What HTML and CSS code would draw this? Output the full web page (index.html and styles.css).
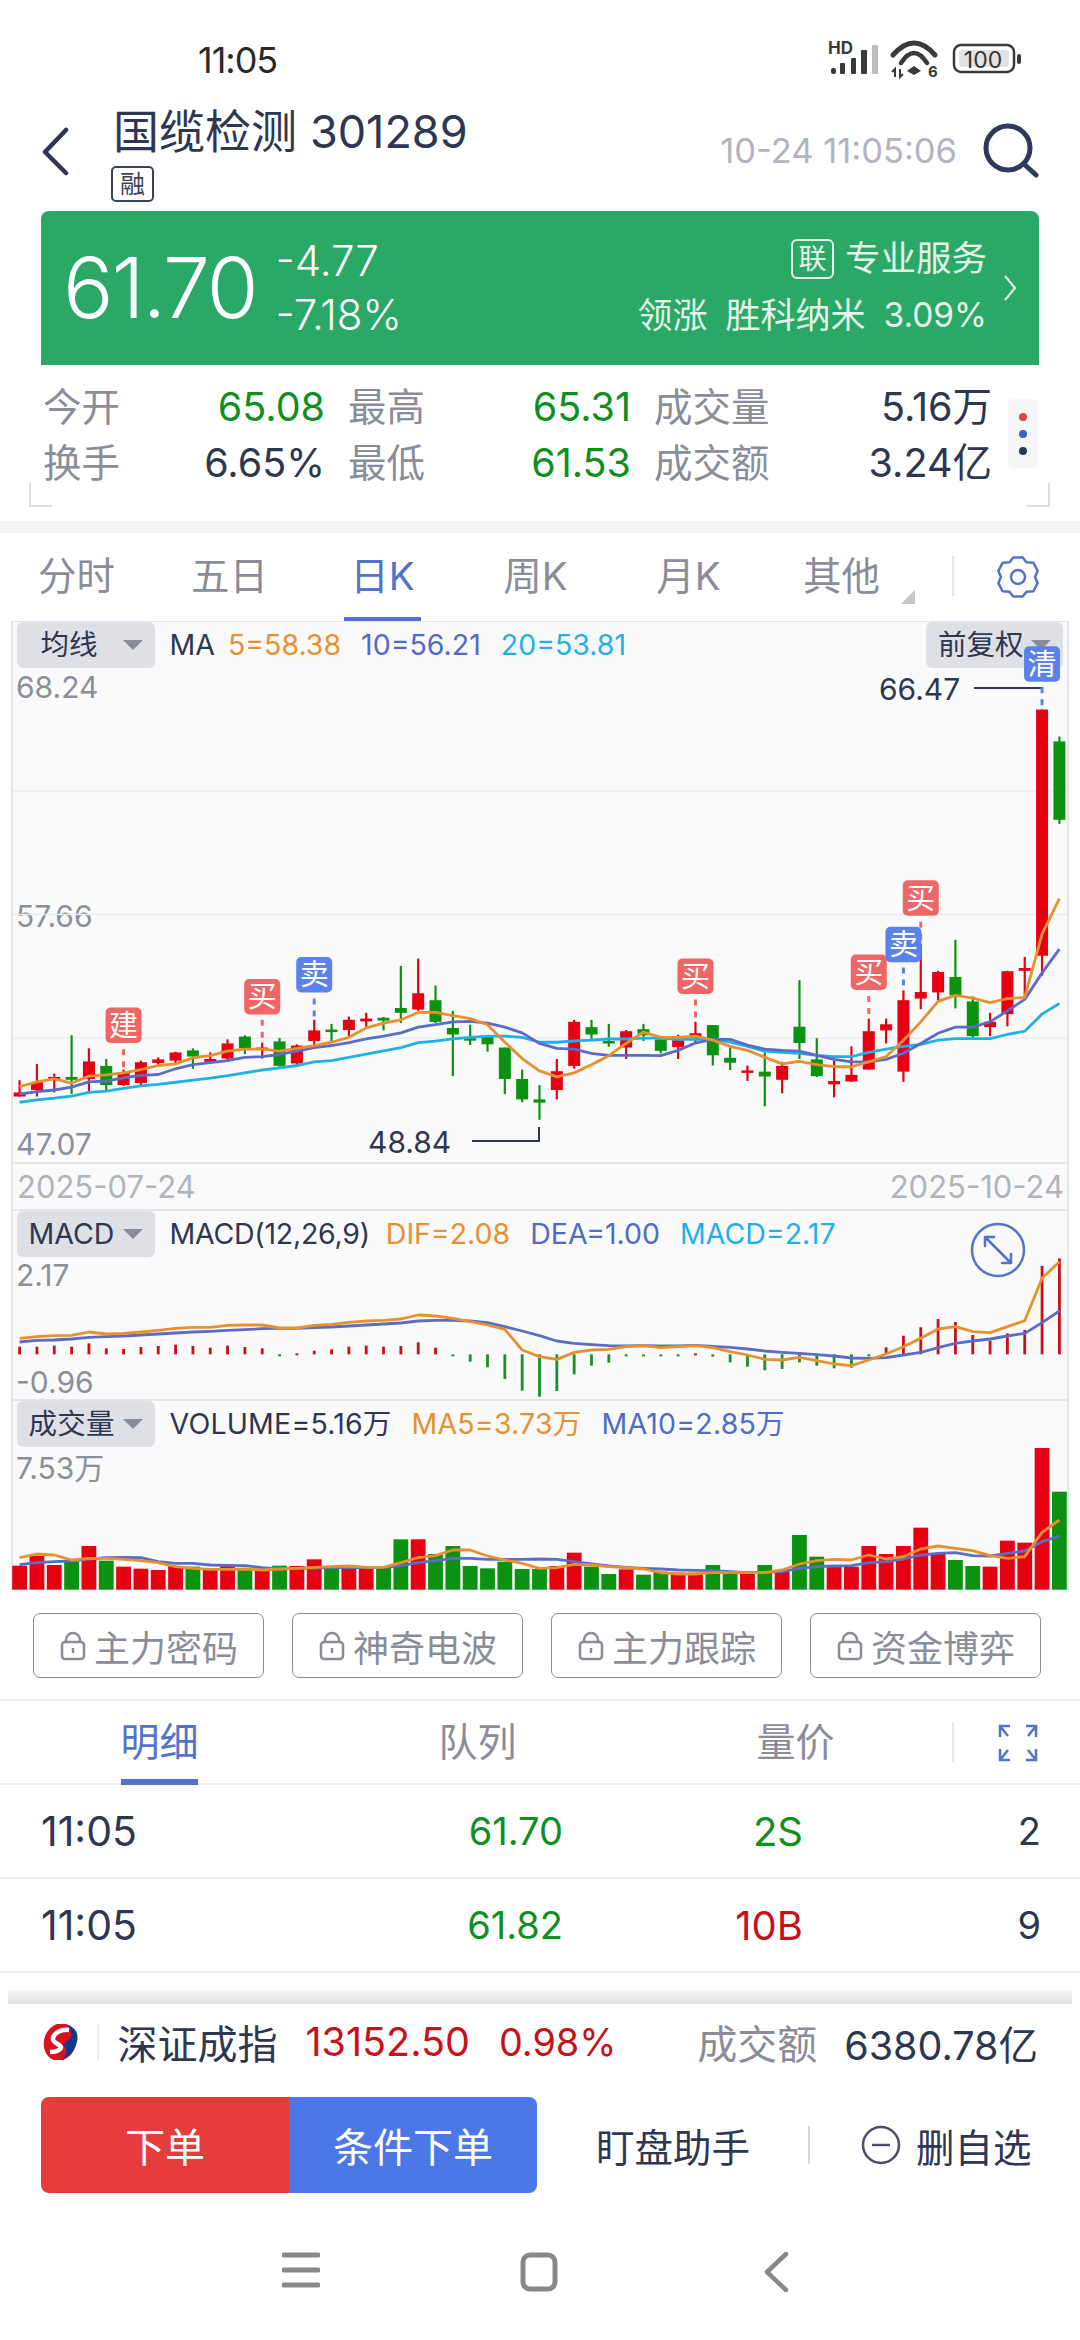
FILE: index.html
```html
<!DOCTYPE html>
<html lang="zh-CN">
<head>
<meta charset="utf-8">
<title>国缆检测 301289</title>
<link rel="stylesheet" href="styles.css">
</head>
<body>
<div class="page">
  <div class="status">
    <span class="clock">11:05</span>
    <svg class="status-icons" width="198" height="40" viewBox="826 40 198 40">
      <text x="828" y="54" class="s-hd">HD</text>
      <rect x="831" y="68" width="5" height="6" rx="2" fill="#3a3a3a"/>
      <rect x="840" y="63" width="5" height="11" rx="1" fill="#3a3a3a"/>
      <rect x="851" y="58" width="5" height="16" rx="1" fill="#3a3a3a"/>
      <rect x="861" y="50" width="6" height="24" rx="1" fill="#3a3a3a"/>
      <rect x="872" y="45" width="6" height="29" rx="1" fill="#bdbdbd"/>
      <path d="M893 55Q914 31 935 55" fill="none" stroke="#3a3a3a" stroke-width="5" stroke-linecap="round"/>
      <path d="M901 63Q914 43 927 63" fill="none" stroke="#3a3a3a" stroke-width="4.5" stroke-linecap="round"/>
      <path d="M907 71L914 66L921 71L914 75Z" fill="#3a3a3a"/>
      <path d="M895 77V69L892 72M900 69V77L903 74" fill="none" stroke="#3a3a3a" stroke-width="2"/>
      <text x="928" y="77" class="s-six">6</text>
      <rect x="954" y="45" width="60" height="27" rx="7" fill="none" stroke="#3a3a3a" stroke-width="2.5"/>
      <rect x="959" y="50" width="50" height="17" rx="3" fill="#e2e2e2"/>
      <text x="983" y="68" class="s-batt">100</text>
      <rect x="1017" y="54" width="4" height="10" rx="2" fill="#3a3a3a"/>
    </svg>
  </div>

  <header class="head">
    <svg class="back" width="28" height="49" viewBox="0 0 28 49"><path d="M25 3L4 25L25 46" fill="none" stroke="#2e3650" stroke-width="4.5" stroke-linecap="round" stroke-linejoin="round"/></svg>
    <div class="name-block">
      <div class="name">国缆检测 <span class="code">301289</span></div>
      <span class="rong">融</span>
    </div>
    <span class="stamp">10-24 11:05:06</span>
    <svg class="search" width="56" height="55" viewBox="0 0 56 55"><circle cx="25" cy="25" r="22" fill="none" stroke="#2e3a58" stroke-width="5"/><path d="M41 41L53 52" stroke="#2e3a58" stroke-width="5" stroke-linecap="round"/></svg>
  </header>

  <section class="quote">
    <div class="price">61.70</div>
    <div class="change"><div>-4.77</div><div>-7.18%</div></div>
    <div class="svc">
      <div class="svc-top"><span class="lian">联</span><span>专业服务</span></div>
      <div class="svc-sub"><span>领涨</span><span>胜科纳米</span><span class="svc-pct">3.09%</span></div>
    </div>
    <svg class="q-arrow" width="14" height="26" viewBox="0 0 14 26"><path d="M2 1L12 13L2 25" fill="none" stroke="#e4f4ea" stroke-width="2"/></svg>
  </section>

  <section class="stats">
    <div class="stat-grid">
      <span class="lab">今开</span><span class="val down">65.08</span>
      <span class="lab">最高</span><span class="val down">65.31</span>
      <span class="lab">成交量</span><span class="val">5.16万</span>
      <span class="lab">换手</span><span class="val">6.65%</span>
      <span class="lab">最低</span><span class="val down">61.53</span>
      <span class="lab">成交额</span><span class="val">3.24亿</span>
    </div>
    <div class="dots"><i class="dot d-red"></i><i class="dot d-blue"></i><i class="dot d-dark"></i></div>
    <i class="bracket b-left"></i><i class="bracket b-right"></i>
  </section>
  <div class="band"></div>

  <nav class="ktabs">
    <div class="ktab"><span>分时</span></div>
    <div class="ktab"><span>五日</span></div>
    <div class="ktab on"><span>日K</span></div>
    <div class="ktab"><span>周K</span></div>
    <div class="ktab"><span>月K</span></div>
    <div class="ktab more"><span>其他</span></div>
    <i class="tab-sep"></i>
    <svg class="gear" width="44" height="44" viewBox="0 0 44 44"><polygon points="17.3,2.5 26.7,2.5 30.5,7.3 37.4,7.7 41.6,15.9 39,22 41.6,28.1 37.4,36.3 30.5,36.7 26.7,41.5 17.3,41.5 13.5,36.7 6.6,36.3 2.4,28.1 5,22 2.4,15.9 6.6,7.7 13.5,7.3" fill="none" stroke="#5272cc" stroke-width="2.5" stroke-linejoin="round"/><circle cx="22" cy="22" r="7" fill="none" stroke="#5272cc" stroke-width="2.5"/></svg>
  </nav>

  <section class="chart">
    <div class="pane p-price">
      <div class="legend">
        <div class="pill"><span class="pill-t">均线</span><i class="caret"></i></div>
        <span class="tight">MA</span>
        <span class="c-or">5=58.38</span><span class="c-bl">10=56.21</span><span class="c-cy">20=53.81</span>
        <div class="pill pill-r"><span>前复权</span><i class="caret"></i></div>
      </div>
      <span class="axis a1">68.24</span>
      <span class="axis a2">57.66</span>
      <span class="axis a3">47.07</span>
      <span class="note n-low">48.84</span>
      <span class="note n-high">66.47</span>
      <svg id="price" class="plot" viewBox="13 621 1054 541"></svg>
    </div>
    <div class="dates"><span>2025-07-24</span><span>2025-10-24</span></div>
    <div class="pane p-macd">
      <div class="legend">
        <div class="pill"><span>MACD</span><i class="caret"></i></div>
        <span class="leg-fn">MACD(12,26,9)</span>
        <span class="c-or">DIF=2.08</span><span class="c-bl">DEA=1.00</span><span class="c-cy">MACD=2.17</span>
      </div>
      <span class="axis a4">2.17</span>
      <span class="axis a5">-0.96</span>
      <svg id="macd" class="plot" viewBox="13 1209 1054 190"></svg>
      <svg class="swap" width="56" height="56" viewBox="0 0 56 56"><circle cx="28" cy="28" r="26" fill="none" stroke="#5272cc" stroke-width="2.5"/><path d="M15 15L41 41M15 24V15H24M41 32V41H32" fill="none" stroke="#5272cc" stroke-width="2.5" stroke-linecap="round" stroke-linejoin="round"/></svg>
    </div>
    <div class="pane p-vol">
      <div class="legend leg-vol">
        <div class="pill"><span>成交量</span><i class="caret"></i></div>
        <span>VOLUME=5.16万</span>
        <span class="c-or">MA5=3.73万</span><span class="c-bl">MA10=2.85万</span>
      </div>
      <span class="axis a6">7.53万</span>
      <svg id="vol" class="plot" viewBox="13 1399 1054 191"></svg>
    </div>
  </section>

  <section class="locks">
    <div class="lock"><svg class="lk" width="26" height="30" viewBox="0 0 26 30"><path d="M6 11V9a7 7 0 0 1 14 0v2" fill="none" stroke="#8a8d98" stroke-width="2.5"/><rect x="2" y="11" width="22" height="17" rx="3" fill="none" stroke="#8a8d98" stroke-width="2.5"/><path d="M13 17v5" stroke="#8a8d98" stroke-width="2.5"/></svg><span>主力密码</span></div>
    <div class="lock"><svg class="lk" width="26" height="30" viewBox="0 0 26 30"><path d="M6 11V9a7 7 0 0 1 14 0v2" fill="none" stroke="#8a8d98" stroke-width="2.5"/><rect x="2" y="11" width="22" height="17" rx="3" fill="none" stroke="#8a8d98" stroke-width="2.5"/><path d="M13 17v5" stroke="#8a8d98" stroke-width="2.5"/></svg><span>神奇电波</span></div>
    <div class="lock"><svg class="lk" width="26" height="30" viewBox="0 0 26 30"><path d="M6 11V9a7 7 0 0 1 14 0v2" fill="none" stroke="#8a8d98" stroke-width="2.5"/><rect x="2" y="11" width="22" height="17" rx="3" fill="none" stroke="#8a8d98" stroke-width="2.5"/><path d="M13 17v5" stroke="#8a8d98" stroke-width="2.5"/></svg><span>主力跟踪</span></div>
    <div class="lock"><svg class="lk" width="26" height="30" viewBox="0 0 26 30"><path d="M6 11V9a7 7 0 0 1 14 0v2" fill="none" stroke="#8a8d98" stroke-width="2.5"/><rect x="2" y="11" width="22" height="17" rx="3" fill="none" stroke="#8a8d98" stroke-width="2.5"/><path d="M13 17v5" stroke="#8a8d98" stroke-width="2.5"/></svg><span>资金博弈</span></div>
  </section>

  <nav class="dtabs">
    <div class="dtab on"><span>明细</span></div>
    <div class="dtab"><span>队列</span></div>
    <div class="dtab"><span>量价</span></div>
    <i class="tab-sep sep2"></i>
    <svg class="full" width="40" height="38" viewBox="0 0 40 38"><path d="M2 13V2H12M2 2L10 12M38 13V2H28M38 2L30 12M2 25V36H12M2 36L10 26M38 25V36H28M38 36L30 26" fill="none" stroke="#5272cc" stroke-width="2.5"/></svg>
  </nav>

  <div class="row"><span class="r-time">11:05</span><span class="r-price down">61.70</span><span class="r-size down">2S</span><span class="r-n">2</span></div>
  <div class="row"><span class="r-time">11:05</span><span class="r-price down">61.82</span><span class="r-size up">10B</span><span class="r-n">9</span></div>

  <div class="shade"></div>

  <section class="index">
    <svg class="sz" width="38" height="36" viewBox="0 0 38 36"><ellipse cx="19" cy="18" rx="16" ry="19" transform="rotate(18 19 18)" fill="#d9121f"/><path d="M26 1C35 3 39 11 35 21C33 27 28 33 22 35C26 29 27 25 22 21L30 14C31 9 29 4 26 1Z" fill="#0d3a8c"/><path d="M28 6C20 5 13 9 12 14C11 19 19 20 20 23C20 26 15 28 9 28" fill="none" stroke="#fff" stroke-width="4.5"/></svg>
    <i class="i-sep"></i>
    <span class="i-name">深证成指</span>
    <span class="i-num up">13152.50</span>
    <span class="i-pct up">0.98%</span>
    <span class="i-lab">成交额</span>
    <span class="i-amt">6380.78亿</span>
  </section>

  <section class="actions">
    <div class="btn b-red">下单</div>
    <div class="btn b-blue">条件下单</div>
    <span class="act-a">盯盘助手</span>
    <i class="act-sep"></i>
    <svg class="minus" width="40" height="40" viewBox="0 0 40 40"><circle cx="20" cy="20" r="18" fill="none" stroke="#4a5068" stroke-width="2.5"/><path d="M11 20H29" stroke="#4a5068" stroke-width="2.5"/></svg>
    <span class="act-b">删自选</span>
  </section>

  <nav class="sysnav">
    <svg width="38" height="36" viewBox="0 0 38 36"><path d="M2 3H36M2 18H36M2 33H36" stroke="#888" stroke-width="5" stroke-linecap="round"/></svg>
    <svg class="sq" width="38" height="40" viewBox="0 0 38 40"><rect x="3" y="3" width="32" height="34" rx="7" fill="none" stroke="#888" stroke-width="5"/></svg>
    <svg class="lt" width="26" height="40" viewBox="0 0 26 40"><path d="M23 2L4 20L23 38" fill="none" stroke="#888" stroke-width="4.5" stroke-linecap="round" stroke-linejoin="round"/></svg>
  </nav>
</div>
<script src="chart.js"></script>
</body>
</html>
```

FILE: styles.css
```css
* { box-sizing: border-box; }
html, body { margin: 0; padding: 0; background: #fff; }
body { font-family: Inter, "Noto Sans CJK SC", sans-serif; color: #2e3650; }
.page { width: 1080px; height: 2340px; overflow: hidden; display: flex; flex-direction: column; }
i { display: block; }

.status { height: 100px; padding: 40px 56px 0 198px; display: flex; justify-content: space-between; align-items: flex-start; flex: none; }
.status-icons { overflow: visible; }
.clock { font: 400 36px/40px Inter, sans-serif; color: #2a2a2a; letter-spacing: -1px; }
.s-hd { font: 700 17px Inter, sans-serif; fill: #3a3a3a; }
.s-six { font: 700 15px Inter, sans-serif; fill: #3a3a3a; }
.s-batt { font: 400 23px Inter, sans-serif; fill: #333; text-anchor: middle; }

.head { height: 111px; padding-left: 41px; padding-right: 41px; display: flex; align-items: flex-start; flex: none; }
.back { margin-top: 27px; flex: none; }
.name-block { margin-left: 42px; padding-top: 8px; }
.name { font-size: 46px; line-height: 46px; padding-left: 2px; white-space: nowrap; }
.code { font-size: 45px; }
.rong { display: flex; align-items: center; justify-content: center; margin-top: 11px; width: 43px; height: 36px; border: 2px solid #3a4258; border-radius: 5px; font-size: 25px; line-height: 1; color: #3a4258; }
.stamp { margin-left: auto; margin-top: 33px; font-size: 34.5px; line-height: 36px; color: #b0b4c0; white-space: nowrap; }
.search { margin-left: 26px; margin-top: 23px; flex: none; }

.quote { margin: 0 41px; height: 154px; flex: none; background: #2aa866; border-radius: 8px 8px 0 0; display: flex; align-items: flex-start; padding-left: 22px; color: #fff; }
.price { font-size: 84px; line-height: 154px; letter-spacing: -2px; font-weight: 300; }
.change { margin-left: 19px; padding-top: 23px; font-size: 42px; line-height: 54px; font-weight: 300; }
.svc { margin-left: auto; padding-top: 28px; display: flex; flex-direction: column; align-items: flex-end; color: #e4f4ea; }
.svc-top { display: flex; align-items: center; gap: 11px; font-size: 35.5px; line-height: 40px; }
.lian { width: 43px; height: 40px; border: 2px solid #e4f4ea; border-radius: 6px; font-size: 28px; line-height: 1; display: flex; align-items: center; justify-content: center; }
.svc-sub { margin-top: 14px; display: flex; align-items: center; gap: 18px; font-size: 35px; line-height: 44px; white-space: nowrap; }
.svc-pct { font-size: 33.5px; }
.q-arrow { margin: 64px 22px 0 16px; flex: none; }

.stats { position: relative; height: 156px; flex: none; padding: 14px 0 0 43px; }
.stat-grid { display: grid; grid-template-columns: 91px 162px 90px 164px 120px 189px; column-gap: 26px; grid-auto-rows: 56px; align-items: center; width: 946px; }
.lab { font-size: 38.5px; line-height: 56px; color: #8a8d98; white-space: nowrap; }
.val { font-size: 39.5px; line-height: 56px; text-align: right; white-space: nowrap; color: #2e3650; margin-right: -3px; }
.down { color: #0f8f1e; }
.up { color: #c8101a; }
.dots { position: absolute; left: 1008px; top: 34px; width: 30px; height: 69px; background: #f5f6f8; border-radius: 5px; display: flex; flex-direction: column; align-items: center; justify-content: center; gap: 9px; }
.dot { width: 8px; height: 8px; border-radius: 50%; }
.d-red { background: #d94a3d; }
.d-blue { background: #3f5fc0; }
.d-dark { background: #2e3650; }
.bracket { position: absolute; top: 118px; width: 23px; height: 24px; border-bottom: 2px solid #dadde4; }
.b-left { left: 29px; border-left: 2px solid #dadde4; }
.b-right { left: 1027px; border-right: 2px solid #dadde4; }
.band { height: 12px; flex: none; background: #f5f5f7; }

.ktabs { height: 88px; flex: none; display: flex; align-items: flex-start; }
.ktab { width: 153px; height: 88px; display: flex; align-items: flex-end; justify-content: center; font-size: 38.5px; color: #8a8d98; position: relative; }
.ktab span { min-width: 77px; text-align: center; line-height: 44px; padding-bottom: 20px; border-bottom: 3px solid transparent; }
.ktab.on { color: #5272cc; }
.ktab.on span { border-bottom: 4px solid #5272cc; padding-bottom: 19px; }
.more::after { content: ""; position: absolute; right: 3px; bottom: 17px; width: 0; height: 0; border-style: solid; border-width: 0 0 14px 14px; border-color: transparent transparent #c4c6cc transparent; }
.tab-sep { width: 1.5px; height: 40px; background: #e6e7ec; margin: 23px 0 0 34px; flex: none; }
.gear { margin: 22px 0 0 42px; flex: none; }

.chart { width: 1058px; height: 969px; margin-left: 11px; flex: none; border-left: 2px solid #e4e5ea; border-right: 2px solid #e4e5ea; background: #fafafb; display: flex; flex-direction: column; }
.pane { position: relative; flex: none; }
.p-price { height: 541px; border-top: 1.5px solid #e4e5ea; }
.p-macd { height: 190px; border-top: 2px solid #e4e5ea; }
.p-vol { height: 191px; border-top: 2px solid #e4e5ea; border-bottom: 2px solid #e8e9ec; }
.plot { position: absolute; left: 0; top: 0; width: 1054px; height: 100%; overflow: visible; pointer-events: none; }
.p-price .plot { top: -1.5px; height: 541px; }
.p-macd .plot { top: -2px; height: 190px; }
.p-vol .plot { top: -2px; height: 191px; }
.legend { display: flex; align-items: center; height: 46px; font: 400 28.5px/46px Inter, "Noto Sans CJK SC", sans-serif; gap: 20px; padding-left: 3.5px; white-space: nowrap; }
.leg-fn { letter-spacing: -.25px; margin-right: -4px; }
.leg-vol { letter-spacing: .2px; }
.pill { width: 138px; height: 46px; flex: none; margin-right: -5px; background: #dfe0e5; border-radius: 6px; display: flex; align-items: center; justify-content: space-between; padding: 0 12px 0 12px; color: #2e3650; font-size: 28.5px; }
.pill-t { padding-left: 12px; }
.pill-r { margin-left: auto; margin-right: 4px; width: 137px; }
.caret { width: 0; height: 0; border-style: solid; border-width: 10px 10.5px 0 10.5px; border-color: #8a8d98 transparent transparent transparent; flex: none; }
.tight { margin-right: -7px; }
.c-or { color: #e8902f; }
.c-bl { color: #4f6ac8; }
.c-cy { color: #1fb0e8; }
.axis { position: absolute; left: 3px; font: 400 30px/36px Inter, "Noto Sans CJK SC", sans-serif; color: #8b8f99; white-space: nowrap; }
.a1 { top: 47px; } .a2 { top: 276px; } .a3 { top: 504px; }
.a4 { top: 46px; } .a5 { top: 153px; } .a6 { top: 49px; }
.note { position: absolute; font: 400 30px/36px Inter, sans-serif; color: #2e3650; }
.n-low { left: 355px; top: 502px; }
.n-high { left: 866px; top: 49px; }
.dates { height: 47px; flex: none; border-top: 2px solid #e4e5ea; display: flex; justify-content: space-between; align-items: center; padding: 0 3px 0 4px; font-size: 31px; line-height: 1; color: #b0b4bc; }
.swap { position: absolute; left: 956.5px; top: 11px; }
.t-tag { font: 400 29px "Noto Sans CJK SC", sans-serif; fill: #fff; text-anchor: middle; }

.locks { height: 111px; flex: none; padding: 23px 39px 0 33px; display: flex; justify-content: space-between; align-items: flex-start; border-bottom: 2px solid #eeeef1; }
.lock { width: 231px; height: 65px; border: 1.5px solid #8a8d98; border-radius: 7px; display: flex; align-items: center; padding-left: 26px; gap: 8px; font-size: 36px; color: #8a8d98; white-space: nowrap; }
.lk { flex: none; }

.dtabs { height: 84px; flex: none; display: flex; align-items: flex-start; border-bottom: 2px solid #eeeef1; }
.dtab { width: 318px; height: 84px; display: flex; justify-content: center; font-size: 39px; color: #8a8d98; }
.dtab span { width: 77px; padding-top: 18px; line-height: 46px; height: 84px; text-align: center; white-space: nowrap; }
.dtab.on { color: #5272cc; }
.dtab.on span { border-bottom: 6px solid #5272cc; }
.sep2 { margin: 21px 0 0 -2px; }
.full { margin: 23px 0 0 44px; flex: none; }

.row { height: 94px; flex: none; display: grid; grid-template-columns: 200px 322px 240px 238px; padding-left: 41px; align-items: center; border-bottom: 2px solid #eeeef1; font-size: 38px; }
.r-time { font-size: 41px; }
.r-size { font-size: 40px; }
.r-price, .r-size, .r-n { text-align: right; }
.r-n { color: #2e3650; }

.shade { height: 31px; flex: none; margin: 0 8px; background: linear-gradient(#fff 0 55%, #f7f7f7 55%, #e0e0e0 100%); }

.index { height: 76px; flex: none; display: flex; align-items: center; padding: 0 42px 0 41px; white-space: nowrap; font-size: 40px; }
.sz { flex: none; }
.i-sep { width: 1.5px; height: 36px; background: #eee; margin: 0 19px 0 18px; flex: none; }
.i-num { margin-left: 28px; font-size: 39.5px; }
.i-pct { margin-left: 29px; font-size: 37.8px; }
.i-lab { margin-left: auto; color: #8a8d98; font-size: 40px; }
.i-amt { margin-left: 27px; font-size: 39.5px; }

.actions { height: 96px; margin-top: 17px; flex: none; padding-left: 41px; display: flex; align-items: center; white-space: nowrap; }
.btn { width: 248px; height: 96px; display: flex; align-items: center; justify-content: center; color: #fff; font-size: 40px; }
.b-red { background: #e73c3c; border-radius: 8px 0 0 8px; }
.b-blue { background: #4b78e6; border-radius: 0 8px 8px 0; }
.act-a { margin-left: 59px; font-size: 38.5px; }
.act-sep { width: 2px; height: 38px; background: #d8d9de; margin-left: 58px; flex: none; }
.minus { margin-left: 51px; flex: none; }
.act-b { margin-left: 15px; font-size: 38.5px; }

.sysnav { flex: none; padding: 59px 0 0 282px; display: flex; align-items: flex-start; }
.sq { margin-left: 200px; }
.lt { margin-left: 205px; }
```

FILE: chart.js
```js
var NS = 19.6, STEP = 17.33;
function X(i) { return +(NS + STEP * i).toFixed(2); }
function YP(z) { return +(530 + z / 2.45).toFixed(2); }
function YB(z) { return +(1170 + z / 3).toFixed(2); }
var RED = '#e60012', GREEN = '#0a9210';

var candles = [
['r',1348,1378,1388,1388],['r',1308,1352,1372,1388],['r',1332,1340,1348,1378],['g',1238,1340,1347,1382],
['r',1270,1302,1345,1375],['g',1296,1313,1360,1375],['r',1322,1330,1360,1362],['r',1300,1304,1355,1360],
['r',1292,1297,1306,1312],['r',1278,1280,1300,1307],['g',1270,1275,1290,1320],['r',1280,1296,1303,1306],
['r',1248,1258,1295,1298],['g',1238,1241,1270,1284],['r',1256,1268,1273,1295],['g',1245,1253,1313,1315],
['r',1260,1263,1307,1312],['r',1200,1226,1252,1262],['g',1210,1224,1230,1255],['r',1192,1200,1225,1240],
['r',1183,1197,1204,1218],['g',1193,1195,1202,1226],['g',1068,1171,1183,1208],['r',1050,1135,1175,1178],
['g',1116,1152,1205,1208],['g',1178,1220,1236,1338],['g',1212,1245,1251,1262],['g',1238,1240,1260,1278],
['g',1268,1268,1345,1382],['g',1322,1345,1395,1402],['g',1360,1395,1403,1445],['r',1296,1326,1372,1395],
['r',1200,1205,1313,1320],['g',1200,1218,1236,1248],['g',1210,1252,1258,1266],['r',1225,1228,1268,1296],
['g',1210,1223,1238,1252],['g',1245,1248,1276,1282],['r',1237,1250,1267,1296],['r',1205,1233,1243,1255],
['g',1213,1213,1287,1312],['g',1265,1293,1305,1323],['r',1312,1324,1329,1350],['g',1280,1327,1339,1412],
['r',1303,1313,1347,1380],['g',1103,1217,1257,1296],['g',1245,1297,1338,1340],['r',1300,1350,1358,1390],
['r',1265,1335,1351,1352],['r',1197,1228,1322,1322],['r',1197,1211,1226,1258],['r',1128,1152,1327,1352],
['r',1015,1132,1148,1174],['r',1080,1083,1133,1155],['g',1004,1095,1140,1172],['g',1143,1155,1240,1244],
['r',1183,1205,1218,1240],['r',1080,1081,1186,1216],['r',1046,1073,1080,1148],['r',440,440,1043,1092],
['g',506,518,710,720]];

var ma5 = [1364,1352,1345,1355,1338,1335,1330,1322,1312,1308,1293,1288,1277,1272,1272,1277,1270,1263,1255,1243,1220,1208,1200,1182,1182,1190,1197,1212,1255,1295,1325,1340,1330,1310,1288,1258,1230,1243,1243,1240,1250,1265,1275,1292,1308,1302,1310,1315,1315,1303,1290,1250,1205,1155,1140,1147,1158,1148,1145,990,903];
var ma10 = [1382,1376,1372,1365,1352,1350,1342,1336,1334,1320,1310,1305,1300,1292,1290,1285,1277,1268,1263,1256,1247,1240,1232,1218,1212,1205,1204,1208,1218,1232,1258,1270,1272,1282,1287,1287,1287,1288,1275,1257,1248,1248,1262,1272,1275,1277,1287,1297,1303,1303,1297,1282,1258,1233,1218,1218,1205,1178,1150,1085,1027];
var ma20 = [1402,1396,1392,1387,1378,1375,1368,1362,1358,1353,1348,1343,1337,1330,1323,1318,1312,1303,1300,1292,1284,1276,1268,1256,1252,1247,1243,1240,1240,1243,1255,1255,1252,1250,1247,1247,1245,1245,1248,1248,1248,1255,1265,1277,1280,1282,1287,1290,1290,1280,1272,1265,1260,1250,1246,1246,1246,1236,1228,1186,1160];

var macdBars = [530,530,527,530,520,535,537,531,528,524,528,533,527,531,535,-556,550,542,538,530,527,530,528,517,533,-556,-575,-592,-627,-662,-680,-663,-613,-587,-578,-556,-556,-556,-556,550,-560,-577,-590,-601,-597,-577,-587,-595,-593,-556,532,497,472,447,456,495,512,490,480,288,265];
var dif = [505,500,497,496,486,492,490,486,481,475,472,472,466,465,465,474,474,466,463,457,453,451,447,435,438,445,455,465,478,510,560,568,547,540,538,530,527,533,530,527,533,545,555,568,570,562,572,582,587,570,552,530,505,477,470,485,488,470,452,325,275];
var dea = [516,511,510,507,502,500,498,495,492,489,486,484,481,479,476,475,475,473,471,468,465,462,459,453,451,451,453,458,470,483,497,513,520,524,527,528,527,528,528,526,529,532,537,543,547,550,554,558,564,565,563,555,547,533,520,513,507,498,490,458,423];
dif[29] = 540;

var vols = [['r',1187],['r',1157],['r',1185],['g',1175],['r',1128],['g',1172],['r',1190],['r',1196],['r',1200],['r',1188],['g',1190],['r',1200],['r',1188],['g',1195],['r',1200],['g',1187],['r',1188],['r',1168],['g',1193],['r',1190],['r',1197],['g',1190],['g',1108],['r',1108],['g',1152],['g',1128],['g',1188],['g',1195],['g',1175],['g',1197],['g',1197],['r',1188],['r',1148],['g',1190],['g',1212],['r',1198],['g',1214],['g',1205],['r',1208],['r',1208],['g',1185],['g',1205],['r',1210],['g',1185],['r',1205],['g',1095],['g',1160],['r',1190],['r',1190],['r',1128],['r',1152],['r',1128],['r',1073],['r',1150],['g',1170],['g',1188],['r',1190],['r',1112],['r',1118],['r',834],['g',965]];
var vma5 = [1163,1152,1155,1170,1165,1165,1168,1172,1178,1190,1195,1198,1198,1197,1200,1197,1195,1192,1190,1188,1192,1192,1178,1163,1157,1140,1140,1158,1170,1180,1195,1193,1183,1185,1190,1193,1197,1208,1212,1212,1208,1207,1208,1208,1200,1182,1172,1168,1170,1155,1167,1160,1137,1128,1135,1142,1157,1165,1160,1087,1050];
var vma10 = [1184,1178,1175,1173,1167,1163,1162,1163,1175,1180,1180,1185,1186,1187,1193,1197,1195,1194,1193,1193,1193,1193,1187,1178,1172,1165,1165,1168,1168,1168,1167,1168,1175,1182,1188,1192,1195,1197,1200,1201,1202,1205,1208,1207,1205,1195,1190,1188,1187,1178,1175,1167,1155,1150,1148,1157,1158,1150,1143,1115,1098];

function poly(arr, fy, color) {
  var pts = arr.map(function (z, i) { return X(i) + ',' + fy(z); }).join(' ');
  return '<polyline points="' + pts + '" fill="none" stroke="' + color + '" stroke-width="2.8" stroke-linejoin="round"/>';
}
function tag(i, zTop, label, color, dashFrom, dashTo) {
  var x = X(i), top = YP(zTop);
  return '<line x1="' + x + '" x2="' + x + '" y1="' + YP(dashFrom) + '" y2="' + YP(dashTo) + '" stroke="' + color + '" stroke-width="3" stroke-dasharray="6 6"/>' +
    '<rect x="' + (x - 18) + '" y="' + top + '" width="36" height="35.5" rx="5" fill="' + color + '"/>' +
    '<text x="' + x + '" y="' + (top + 28.5) + '" class="t-tag">' + label + '</text>';
}

var s = '';
[791, 914.5, 1038].forEach(function (y) {
  s += '<line x1="13" x2="1067" y1="' + y + '" y2="' + y + '" stroke="#ececef" stroke-width="1.5"/>';
});
candles.forEach(function (c, i) {
  var col = c[0] === 'r' ? RED : GREEN, x = X(i);
  s += '<line x1="' + x + '" x2="' + x + '" y1="' + YP(c[1]) + '" y2="' + YP(c[4]) + '" stroke="' + col + '" stroke-width="2.2"/>';
  s += '<rect x="' + (x - 6) + '" y="' + YP(c[2]) + '" width="12" height="' + Math.max(2.5, YP(c[3]) - YP(c[2])) + '" fill="' + col + '"/>';
});
s += poly(ma20, YP, '#1fb0e8') + poly(ma10, YP, '#5a6cc8') + poly(ma5, YP, '#e8902f');
s += '<path d="M472 1141H539V1127M974 688H1043" fill="none" stroke="#2e3650" stroke-width="2"/>';
s += tag(6, 1170, '建', '#f06565', 1272, 1322);
s += tag(14, 1100, '买', '#f06565', 1200, 1256);
s += tag(17, 1046, '卖', '#5b82ea', 1148, 1200);
s += tag(39, 1050, '买', '#f06565', 1150, 1205);
s += tag(49, 1040, '买', '#f06565', 1142, 1197);
s += tag(52, 858, '买', '#f06565', 960, 1015);
s += tag(51, 972, '卖', '#5b82ea', 1072, 1128);
s += tag(59, 285, '清', '#5b82ea', 385, 430);
document.getElementById('price').innerHTML = s;

var m = '';
macdBars.forEach(function (v, i) {
  var neg = v < 0, a = Math.abs(v), x = X(i);
  m += '<rect x="' + (x - 1.4) + '" y="' + YB(neg ? 553 : a) + '" width="2.8" height="' + (Math.abs(a - 553) / 3 + (Math.abs(a - 553) < 5 ? 1 : 0)) + '" fill="' + (neg ? '#1a8f2a' : '#c8101a') + '"/>';
});
m += poly(dea, YB, '#5a6cc8') + poly(dif, YB, '#e8902f');
document.getElementById('macd').innerHTML = m;

var v = '';
vols.forEach(function (b, i) {
  v += '<rect x="' + (X(i) - 7.4) + '" y="' + YB(b[1]) + '" width="14.8" height="' + (YB(1259) - YB(b[1])) + '" fill="' + (b[0] === 'r' ? RED : GREEN) + '"/>';
});
v += poly(vma10, YB, '#5a6cc8') + poly(vma5, YB, '#e8902f');
document.getElementById('vol').innerHTML = v;
```
